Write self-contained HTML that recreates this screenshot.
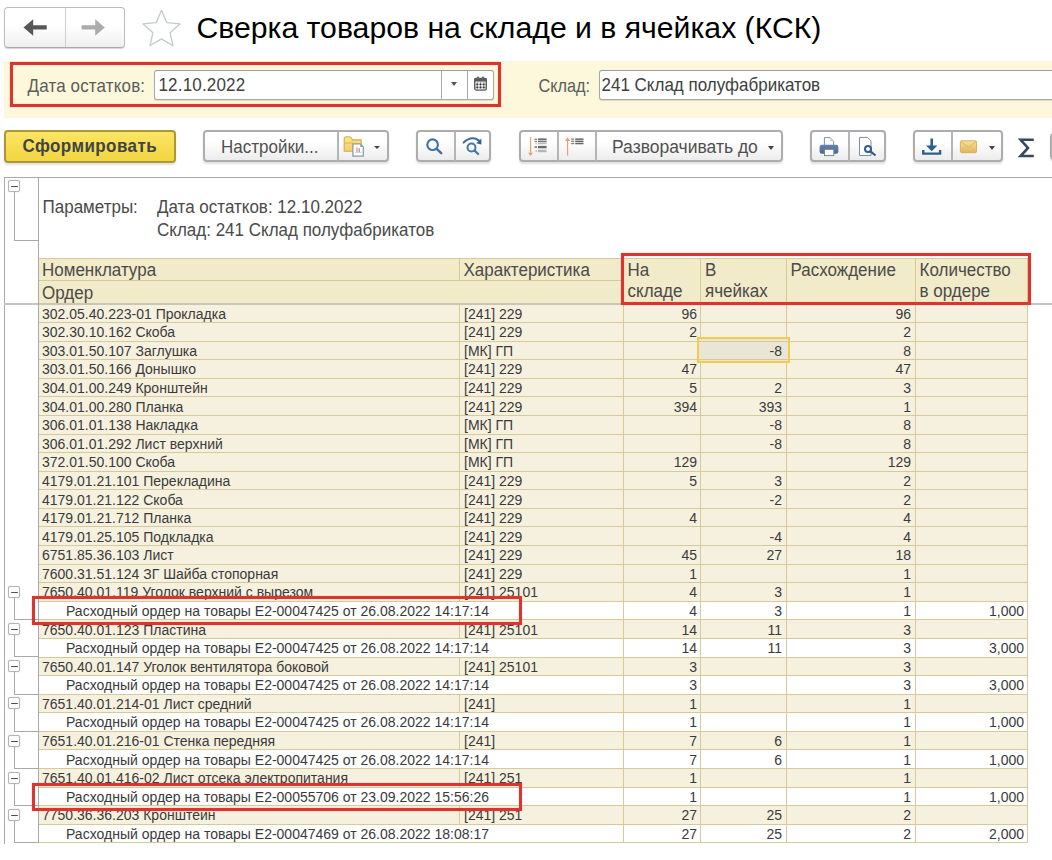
<!DOCTYPE html>
<html><head><meta charset="utf-8">
<style>
html,body{margin:0;padding:0;background:#fff;}
body{width:1052px;height:860px;overflow:hidden;position:relative;font-family:"Liberation Sans",sans-serif;}
.a{position:absolute;}
.nav{position:absolute;left:4px;top:7px;width:119px;height:39px;border:1px solid #bdbdbd;border-bottom-color:#a9a9a9;border-radius:4px;background:linear-gradient(#fff 45%,#efefef);box-shadow:0 1px 1px rgba(0,0,0,.18);}
.title{position:absolute;left:196.5px;top:12.8px;font-size:30.2px;line-height:30px;color:#000;white-space:nowrap;}
.panel{position:absolute;left:4px;top:61px;width:1048px;height:57px;background:#fdf8db;}
.redbox{position:absolute;z-index:5;border:3px solid #dc3531;box-sizing:border-box;box-shadow:0 0 0.8px rgba(220,53,49,.7), inset 0 0 0.8px rgba(220,53,49,.7);}
.lbl{position:absolute;font-size:17px;line-height:17px;color:#5c5c5c;white-space:nowrap;transform:scaleY(1.13);transform-origin:0 14px;}
.inp{position:absolute;box-shadow:0 1px 1px rgba(0,0,0,.12);background:#fff;border:1px solid #a9a9a9;border-top-color:#9d9d9d;border-radius:3px;box-sizing:border-box;}
.itxt{position:absolute;font-size:17px;line-height:17px;color:#404040;white-space:nowrap;transform:scaleY(1.13);transform-origin:0 14px;}
.btn{position:absolute;box-sizing:border-box;border:2px solid #adadad;border-radius:4px;background:linear-gradient(#fff 35%,#ececec);box-shadow:0 2px 2px rgba(0,0,0,.12);}
.btxt{position:absolute;font-size:17.5px;line-height:17.5px;color:#505050;white-space:nowrap;transform:scaleY(1.08);transform-origin:0 14px;}
.dv{position:absolute;width:2px;background:#b5b5b5;}
.tri{position:absolute;width:0;height:0;border-left:3.5px solid transparent;border-right:3.5px solid transparent;border-top:4px solid #444;}
.rep{position:absolute;left:4px;top:177px;width:1048px;height:666px;border-top:1px solid #a9a9a9;border-left:1px solid #a9a9a9;}
.row{position:absolute;left:38px;width:990px;}
.hl{position:absolute;z-index:2;left:38px;width:990px;height:1px;background:#d5cb9a;}
.vl{position:absolute;z-index:1;width:1px;background:#d5cb9a;}
.t{position:absolute;z-index:3;font-size:14px;line-height:14px;color:#3a3a3a;white-space:nowrap;}
.t.r{text-align:right;}
.tl{position:absolute;background:#a9a9a9;}
.mb{position:absolute;width:10px;height:10px;border:1px solid #b4b4b4;border-radius:2px;background:#fff;box-shadow:0 0 1px rgba(0,0,0,.25);}
.mb:after{content:"";position:absolute;left:1.5px;top:4.5px;width:7.5px;height:1.5px;background:#505050;border-radius:1px;}
.hd{position:absolute;background:#f2ebc9;}
.ht{position:absolute;font-size:17px;line-height:17px;color:#4a4a4a;white-space:nowrap;transform:scaleY(1.09);transform-origin:0 14px;}
</style></head><body>

<!-- nav buttons -->
<div class="nav"></div>
<div class="a" style="left:65px;top:8px;width:1px;height:39px;background:#cfcfcf"></div>
<svg class="a" style="left:0;top:0" width="130" height="50">
  <polygon points="23.5,27.4 33.2,19.2 33.2,25.3 46.7,25.3 46.7,29.6 33.2,29.6 33.2,35.8" fill="#575757"/>
  <polygon points="104.8,27.4 95.2,19.2 95.2,25.3 81.6,25.3 81.6,29.6 95.2,29.6 95.2,35.8" fill="#ababab"/>
</svg>
<!-- star -->
<svg class="a" style="left:138px;top:6px" width="48" height="44">
  <polygon points="23.50,4.30 28.79,16.62 42.14,17.84 32.06,26.68 35.02,39.76 23.50,32.90 11.98,39.76 14.94,26.68 4.86,17.84 18.21,16.62" fill="none" stroke="#c5c9ce" stroke-width="1.3" stroke-linejoin="round"/>
</svg>
<div class="title">Сверка товаров на складе и в ячейках (КСК)</div>

<!-- filter panel -->
<div class="panel"></div>
<div class="lbl" style="left:27.5px;top:77.6px;letter-spacing:0.15px">Дата остатков:</div>
<div class="inp" style="left:154px;top:70px;width:339.5px;height:30px"></div>
<div class="itxt" style="left:158.5px;top:77.4px;letter-spacing:0.17px">12.10.2022</div>
<div class="a" style="left:441px;top:71px;width:1px;height:28px;background:#a9a9a9"></div>
<div class="a" style="left:467px;top:71px;width:1px;height:28px;background:#a9a9a9"></div>
<div class="tri" style="left:451px;top:82px;border-top-color:#555"></div>
<svg class="a" style="left:472px;top:75px" width="18" height="18">
  <rect x="2.7" y="3.5" width="11.6" height="11.6" rx="1.6" fill="#e4e4e4" stroke="#5e5e5e" stroke-width="1.3"/>
  <rect x="2.2" y="3" width="12.6" height="3.6" rx="1.2" fill="#5a5a5a"/>
  <circle cx="6" cy="2.9" r="1.3" fill="#6a6a6a"/><circle cx="11" cy="2.9" r="1.3" fill="#6a6a6a"/>
  <g stroke="#8a8a8a" stroke-width="0.7"><line x1="5.2" y1="6.5" x2="5.2" y2="14.5"/><line x1="8.5" y1="6.5" x2="8.5" y2="14.5"/><line x1="11.8" y1="6.5" x2="11.8" y2="14.5"/>
  <line x1="3" y1="9.4" x2="14" y2="9.4"/><line x1="3" y1="12.4" x2="14" y2="12.4"/></g>
  <g fill="#333"><circle cx="5.2" cy="9.4" r="0.8"/><circle cx="8.5" cy="9.4" r="0.8"/><circle cx="11.8" cy="9.4" r="0.8"/><circle cx="5.2" cy="12.4" r="0.8"/><circle cx="8.5" cy="12.4" r="0.8"/><circle cx="11.8" cy="12.4" r="0.8"/></g>
</svg>
<div class="redbox" style="left:10px;top:62px;width:490.5px;height:44.5px"></div>
<div class="lbl" style="left:538.5px;top:77.8px;font-size:16.3px">Склад:</div>
<div class="inp" style="left:598.5px;top:70px;width:480px;height:30px"></div>
<div class="itxt" style="left:601.5px;top:77.4px">241 Склад полуфабрикатов</div>

<!-- toolbar -->
<div class="btn" style="left:4px;top:130px;width:172px;height:32.5px;border:2px solid #aa9838;background:linear-gradient(#fbe565,#f1d640)"></div>
<div class="btxt" style="left:22.5px;top:137.8px;font-weight:bold;font-size:17px;line-height:17px;letter-spacing:0.42px;color:#434343">Сформировать</div>

<div class="btn" style="left:203px;top:130px;width:186px;height:32px"></div>
<div class="dv" style="left:336.5px;top:131px;height:30px"></div>
<div class="btxt" style="left:221px;top:139.3px;font-size:17px;line-height:17px">Настройки...</div>
<svg class="a" style="left:338px;top:132px" width="30" height="28">
  <defs><linearGradient id="fg" x1="0" y1="0" x2="0" y2="1"><stop offset="0" stop-color="#fbe57e"/><stop offset="1" stop-color="#f2cf73"/></linearGradient></defs>
  <path d="M6.2 19.3 V6.8 Q6.2 4.8 8.4 4.8 H11.3 Q12.7 4.8 13.6 6.3 L14.5 7.9 H23.2 V19.3 Z" fill="url(#fg)" stroke="#d6aa52" stroke-width="1.1"/>
  <path d="M6.2 11 H15" stroke="#d9b060" stroke-width="0.9"/>
  <path d="M14.9 11.9 H22.3 L25.3 14.9 V24.1 H14.9 Z" fill="#fff" stroke="#8d9bab" stroke-width="1.3"/>
  <path d="M22.3 11.9 V14.9 H25.3 Z" fill="#8d9bab"/>
  <rect x="18.3" y="15.3" width="1.3" height="4.8" fill="#ec8c8c"/><rect x="20.6" y="16.2" width="1.3" height="3.9" fill="#7cbb7c"/>
  <rect x="17.2" y="20.1" width="6.5" height="0.6" fill="#b9b9b9"/>
</svg>
<div class="tri" style="left:374px;top:146px;border-left-width:3.3px;border-right-width:3.3px;border-top-width:3px"></div>

<div class="btn" style="left:416px;top:130px;width:75px;height:32px"></div>
<div class="dv" style="left:454px;top:131px;height:30px"></div>
<svg class="a" style="left:424px;top:136px" width="22" height="22">
  <circle cx="8.6" cy="8.7" r="5.3" fill="none" stroke="#3f72a3" stroke-width="2.1"/>
  <line x1="13" y1="13.2" x2="17.2" y2="17.2" stroke="#3f72a3" stroke-width="2.5" stroke-linecap="round"/>
</svg>
<svg class="a" style="left:460px;top:132px" width="26" height="26">
  <circle cx="11.5" cy="15.5" r="4" fill="none" stroke="#4576a6" stroke-width="2"/>
  <line x1="14.6" y1="18.6" x2="18.2" y2="22" stroke="#4576a6" stroke-width="2.2" stroke-linecap="round"/>
  <path d="M3.6 10.6 Q11.5 3.2 19 8.6" fill="none" stroke="#3a6c9e" stroke-width="2" stroke-linecap="round"/>
  <polygon points="21.4,6.6 21.4,12.4 16.2,11.2" fill="#2f6496"/>
</svg>

<div class="btn" style="left:518.5px;top:130px;width:264px;height:32px"></div>
<div class="dv" style="left:556.5px;top:131px;height:30px"></div>
<div class="dv" style="left:595px;top:131px;height:30px"></div>
<svg class="a" style="left:526px;top:135px" width="24" height="24">
  <rect x="4" y="2" width="1.1" height="16.5" fill="#f29b6b"/>
  <polygon points="2,17.8 7.1,17.8 4.55,20.9" fill="#f29b6b"/>
  <g fill="#6c6c6c"><rect x="12" y="3.4" width="8.6" height="2"/><rect x="12" y="6.1" width="8.6" height="1.2"/><rect x="12" y="10.9" width="8.6" height="2.4"/></g>
  <g fill="#b4b4b4"><rect x="12" y="8.1" width="8.6" height="1.1"/><rect x="12" y="14.8" width="8.6" height="2.4"/></g>
  <g fill="#8a8a8a"><rect x="8.4" y="3.6" width="2.6" height="1.6"/><rect x="8.4" y="6.1" width="2.6" height="1.1"/><rect x="8.4" y="11.2" width="2.6" height="1.8"/></g>
  <g fill="#c8c8c8"><rect x="9.4" y="8" width="1.6" height="1.2"/><rect x="9.4" y="15" width="1.6" height="2"/></g>
</svg>
<svg class="a" style="left:563px;top:135px" width="24" height="24">
  <rect x="4.05" y="4.5" width="1.1" height="16.2" fill="#f29b6b"/>
  <polygon points="2,5.9 7.2,5.9 4.6,2.2" fill="#f29b6b"/>
  <g fill="#666"><rect x="12.2" y="3.4" width="8.3" height="1.5"/><rect x="12.2" y="5.6" width="8.3" height="1.5"/><rect x="12.2" y="7.8" width="8.3" height="1.5"/></g>
  <g fill="#808080"><rect x="8.2" y="3.5" width="3" height="1.3"/><rect x="8.2" y="5.7" width="3" height="1.3"/><rect x="8.2" y="7.9" width="3" height="1.3"/></g>
</svg>
<div class="btxt" style="left:612px;top:139px">Разворачивать до</div>
<div class="tri" style="left:767.5px;top:146px"></div>

<div class="btn" style="left:810px;top:130px;width:76px;height:32px"></div>
<div class="dv" style="left:848px;top:131px;height:30px"></div>
<svg class="a" style="left:816px;top:135px" width="26" height="24">
  <defs><linearGradient id="pg" x1="0" y1="0" x2="0" y2="1"><stop offset="0" stop-color="#6383ad"/><stop offset="1" stop-color="#4a6a92"/></linearGradient></defs>
  <path d="M8.4 2.6 h5.6 l3.6 3.6 v4.5 h-9.2z" fill="#fff" stroke="#7f90a6" stroke-width="1"/>
  <path d="M14 2.6 v3.6 h3.6z" fill="#c9d3df"/>
  <rect x="3.6" y="9.7" width="18.8" height="9" rx="2.3" fill="url(#pg)"/>
  <rect x="8.5" y="14.3" width="9.3" height="6.3" fill="#fff" stroke="#6a7d96" stroke-width="0.9"/>
</svg>
<svg class="a" style="left:856px;top:135px" width="24" height="24">
  <path d="M3.5 2.4 h8 l3.5 3.5 v14.6 h-11.5z" fill="#fff" stroke="#7d8fa3" stroke-width="1"/>
  <circle cx="12" cy="14" r="3" fill="none" stroke="#2d5f8a" stroke-width="2"/>
  <line x1="14.2" y1="16.2" x2="19.5" y2="20.5" stroke="#2d5f8a" stroke-width="2.2"/>
</svg>

<div class="btn" style="left:913px;top:130px;width:90px;height:32px"></div>
<div class="dv" style="left:950.5px;top:131px;height:30px"></div>
<svg class="a" style="left:920px;top:135px" width="24" height="24">
  <rect x="10.4" y="3.5" width="2.6" height="8" fill="#2d5f8a"/>
  <polygon points="6,10.5 17.4,10.5 11.7,16.3" fill="#2d5f8a"/>
  <path d="M3.3 15 v3.6 h16.8 v-3.6" fill="none" stroke="#2d5f8a" stroke-width="2.4"/>
</svg>
<svg class="a" style="left:958px;top:138px" width="22" height="18">
  <defs><linearGradient id="eg" x1="0" y1="0" x2="0" y2="1"><stop offset="0" stop-color="#f7e09a"/><stop offset="1" stop-color="#e2b65e"/></linearGradient></defs>
  <rect x="2.4" y="2.8" width="16.2" height="11.9" rx="1.4" fill="url(#eg)" stroke="#d9a94f" stroke-width="0.9"/>
  <path d="M3 3.6 L10.5 9.6 L18 3.6" fill="none" stroke="#d9b063" stroke-width="0.9"/>
  <path d="M3 14 L8.2 8.6 M18 14 L12.8 8.6" fill="none" stroke="#e0b868" stroke-width="0.7"/>
</svg>
<div class="tri" style="left:989px;top:146px"></div>

<svg class="a" style="left:1017px;top:137px" width="20" height="22">
  <path d="M16.8 2.8 H3.6 L11 11 L3.6 19 H16.8" fill="none" stroke="#34495e" stroke-width="2.6" stroke-linejoin="miter"/>
</svg>
<div class="btn" style="left:1050px;top:133px;width:20px;height:27px"></div>

<!-- report -->
<div class="rep"></div>
<div class="a" style="left:4px;top:303px;width:34px;height:2px;background:#c6c6c6"></div>
<div class="a" style="left:1028px;top:303px;width:24px;height:2px;background:#c6c6c6"></div>
<div class="tl" style="left:14px;top:192px;width:1px;height:48px"></div>
<div class="tl" style="left:14px;top:240px;width:24px;height:1px"></div>
<div class="mb" style="left:8px;top:180px"></div>
<div class="ht" style="left:42.5px;top:199px">Параметры:</div>
<div class="ht" style="left:157px;top:199.2px">Дата остатков: 12.10.2022</div>
<div class="ht" style="left:157px;top:221.9px">Склад: 241 Склад полуфабрикатов</div>

<!-- header -->
<div class="hd" style="left:38px;top:258px;width:990px;height:46px"></div>
<div class="a" style="left:38px;top:258px;width:990px;height:1px;background:#d5cb9a"></div>
<div class="a" style="left:38px;top:280px;width:585px;height:1px;background:#d5cb9a"></div>
<div class="a" style="left:459px;top:258px;width:1px;height:23px;background:#d5cb9a"></div>
<div class="a" style="left:623px;top:258px;width:1px;height:46px;background:#d5cb9a"></div>
<div class="a" style="left:700px;top:258px;width:1px;height:46px;background:#d5cb9a"></div>
<div class="a" style="left:786px;top:258px;width:1px;height:46px;background:#d5cb9a"></div>
<div class="a" style="left:915px;top:258px;width:1px;height:46px;background:#d5cb9a"></div>
<div class="a" style="left:1027px;top:258px;width:1px;height:46px;background:#d5cb9a"></div>

<div class="ht" style="left:42px;top:261.7px">Номенклатура</div>
<div class="ht" style="left:42px;top:284.7px">Ордер</div>
<div class="ht" style="left:463.5px;top:261.7px">Характеристика</div>
<div class="ht" style="left:627.5px;top:261.7px">На</div>
<div class="ht" style="left:627.5px;top:282.6px">складе</div>
<div class="ht" style="left:705px;top:261.7px">В</div>
<div class="ht" style="left:705px;top:282.6px">ячейках</div>
<div class="ht" style="left:790.5px;top:261.7px">Расхождение</div>
<div class="ht" style="left:919.5px;top:261.7px">Количество</div>
<div class="ht" style="left:919.5px;top:282.6px">в ордере</div>

<div class="row" style="top:304.0px;height:18.58px;background:#f6f1de"></div>
<div class="row" style="top:322.58px;height:18.58px;background:#f6f1de"></div>
<div class="row" style="top:341.16px;height:18.58px;background:#f6f1de"></div>
<div class="row" style="top:359.74px;height:18.58px;background:#f6f1de"></div>
<div class="row" style="top:378.32px;height:18.58px;background:#f6f1de"></div>
<div class="row" style="top:396.9px;height:18.58px;background:#f6f1de"></div>
<div class="row" style="top:415.48px;height:18.58px;background:#f6f1de"></div>
<div class="row" style="top:434.06px;height:18.58px;background:#f6f1de"></div>
<div class="row" style="top:452.64px;height:18.58px;background:#f6f1de"></div>
<div class="row" style="top:471.22px;height:18.58px;background:#f6f1de"></div>
<div class="row" style="top:489.8px;height:18.58px;background:#f6f1de"></div>
<div class="row" style="top:508.38px;height:18.58px;background:#f6f1de"></div>
<div class="row" style="top:526.96px;height:18.58px;background:#f6f1de"></div>
<div class="row" style="top:545.54px;height:18.58px;background:#f6f1de"></div>
<div class="row" style="top:564.12px;height:18.58px;background:#f6f1de"></div>
<div class="row" style="top:582.7px;height:18.58px;background:#f6f1de"></div>
<div class="row" style="top:601.28px;height:18.58px;background:#fff"></div>
<div class="row" style="top:619.86px;height:18.58px;background:#f6f1de"></div>
<div class="row" style="top:638.44px;height:18.58px;background:#fff"></div>
<div class="row" style="top:657.02px;height:18.58px;background:#f6f1de"></div>
<div class="row" style="top:675.6px;height:18.58px;background:#fff"></div>
<div class="row" style="top:694.18px;height:18.58px;background:#f6f1de"></div>
<div class="row" style="top:712.76px;height:18.58px;background:#fff"></div>
<div class="row" style="top:731.34px;height:18.58px;background:#f6f1de"></div>
<div class="row" style="top:749.92px;height:18.58px;background:#fff"></div>
<div class="row" style="top:768.5px;height:18.58px;background:#f6f1de"></div>
<div class="row" style="top:787.08px;height:18.58px;background:#fff"></div>
<div class="row" style="top:805.66px;height:18.58px;background:#f6f1de"></div>
<div class="row" style="top:824.24px;height:18.58px;background:#fff"></div>
<div class="hl" style="top:322px"></div>
<div class="hl" style="top:341px"></div>
<div class="hl" style="top:359px"></div>
<div class="hl" style="top:378px"></div>
<div class="hl" style="top:396px"></div>
<div class="hl" style="top:415px"></div>
<div class="hl" style="top:434px"></div>
<div class="hl" style="top:452px"></div>
<div class="hl" style="top:471px"></div>
<div class="hl" style="top:489px"></div>
<div class="hl" style="top:508px"></div>
<div class="hl" style="top:526px"></div>
<div class="hl" style="top:545px"></div>
<div class="hl" style="top:564px"></div>
<div class="hl" style="top:582px"></div>
<div class="hl" style="top:601px"></div>
<div class="hl" style="top:619px"></div>
<div class="hl" style="top:638px"></div>
<div class="hl" style="top:657px"></div>
<div class="hl" style="top:675px"></div>
<div class="hl" style="top:694px"></div>
<div class="hl" style="top:712px"></div>
<div class="hl" style="top:731px"></div>
<div class="hl" style="top:749px"></div>
<div class="hl" style="top:768px"></div>
<div class="hl" style="top:787px"></div>
<div class="hl" style="top:805px"></div>
<div class="hl" style="top:824px"></div>
<div class="hl" style="top:842px"></div>
<div class="vl" style="left:38px;top:304.0px;height:538.82px"></div>
<div class="vl" style="left:459px;top:304.0px;height:19.08px"></div>
<div class="vl" style="left:459px;top:322.58px;height:19.08px"></div>
<div class="vl" style="left:459px;top:341.16px;height:19.08px"></div>
<div class="vl" style="left:459px;top:359.74px;height:19.08px"></div>
<div class="vl" style="left:459px;top:378.32px;height:19.08px"></div>
<div class="vl" style="left:459px;top:396.9px;height:19.08px"></div>
<div class="vl" style="left:459px;top:415.48px;height:19.08px"></div>
<div class="vl" style="left:459px;top:434.06px;height:19.08px"></div>
<div class="vl" style="left:459px;top:452.64px;height:19.08px"></div>
<div class="vl" style="left:459px;top:471.22px;height:19.08px"></div>
<div class="vl" style="left:459px;top:489.8px;height:19.08px"></div>
<div class="vl" style="left:459px;top:508.38px;height:19.08px"></div>
<div class="vl" style="left:459px;top:526.96px;height:19.08px"></div>
<div class="vl" style="left:459px;top:545.54px;height:19.08px"></div>
<div class="vl" style="left:459px;top:564.12px;height:19.08px"></div>
<div class="vl" style="left:459px;top:582.7px;height:19.08px"></div>
<div class="vl" style="left:459px;top:619.86px;height:19.08px"></div>
<div class="vl" style="left:459px;top:657.02px;height:19.08px"></div>
<div class="vl" style="left:459px;top:694.18px;height:19.08px"></div>
<div class="vl" style="left:459px;top:731.34px;height:19.08px"></div>
<div class="vl" style="left:459px;top:768.5px;height:19.08px"></div>
<div class="vl" style="left:459px;top:805.66px;height:19.08px"></div>
<div class="vl" style="left:623px;top:304.0px;height:538.82px"></div>
<div class="vl" style="left:700px;top:304.0px;height:538.82px"></div>
<div class="vl" style="left:786px;top:304.0px;height:538.82px"></div>
<div class="vl" style="left:915px;top:304.0px;height:538.82px"></div>
<div class="vl" style="left:1027px;top:304.0px;height:538.82px"></div>
<div class="t" style="left:42px;top:306.7px">302.05.40.223-01 Прокладка</div>
<div class="t" style="left:464px;top:306.7px">[241] 229</div>
<div class="t r" style="right:355px;top:306.7px">96</div>
<div class="t r" style="right:141px;top:306.7px">96</div>
<div class="t" style="left:42px;top:325.28px">302.30.10.162 Скоба</div>
<div class="t" style="left:464px;top:325.28px">[241] 229</div>
<div class="t r" style="right:355px;top:325.28px">2</div>
<div class="t r" style="right:141px;top:325.28px">2</div>
<div class="t" style="left:42px;top:343.86px">303.01.50.107 Заглушка</div>
<div class="t" style="left:464px;top:343.86px">[МК] ГП</div>
<div class="t r" style="right:270px;top:343.86px">-8</div>
<div class="t r" style="right:141px;top:343.86px">8</div>
<div class="t" style="left:42px;top:362.44px">303.01.50.166 Донышко</div>
<div class="t" style="left:464px;top:362.44px">[241] 229</div>
<div class="t r" style="right:355px;top:362.44px">47</div>
<div class="t r" style="right:141px;top:362.44px">47</div>
<div class="t" style="left:42px;top:381.02px">304.01.00.249 Кронштейн</div>
<div class="t" style="left:464px;top:381.02px">[241] 229</div>
<div class="t r" style="right:355px;top:381.02px">5</div>
<div class="t r" style="right:270px;top:381.02px">2</div>
<div class="t r" style="right:141px;top:381.02px">3</div>
<div class="t" style="left:42px;top:399.6px">304.01.00.280 Планка</div>
<div class="t" style="left:464px;top:399.6px">[241] 229</div>
<div class="t r" style="right:355px;top:399.6px">394</div>
<div class="t r" style="right:270px;top:399.6px">393</div>
<div class="t r" style="right:141px;top:399.6px">1</div>
<div class="t" style="left:42px;top:418.18px">306.01.01.138 Накладка</div>
<div class="t" style="left:464px;top:418.18px">[МК] ГП</div>
<div class="t r" style="right:270px;top:418.18px">-8</div>
<div class="t r" style="right:141px;top:418.18px">8</div>
<div class="t" style="left:42px;top:436.76px">306.01.01.292 Лист верхний</div>
<div class="t" style="left:464px;top:436.76px">[МК] ГП</div>
<div class="t r" style="right:270px;top:436.76px">-8</div>
<div class="t r" style="right:141px;top:436.76px">8</div>
<div class="t" style="left:42px;top:455.34px">372.01.50.100 Скоба</div>
<div class="t" style="left:464px;top:455.34px">[МК] ГП</div>
<div class="t r" style="right:355px;top:455.34px">129</div>
<div class="t r" style="right:141px;top:455.34px">129</div>
<div class="t" style="left:42px;top:473.92px">4179.01.21.101 Перекладина</div>
<div class="t" style="left:464px;top:473.92px">[241] 229</div>
<div class="t r" style="right:355px;top:473.92px">5</div>
<div class="t r" style="right:270px;top:473.92px">3</div>
<div class="t r" style="right:141px;top:473.92px">2</div>
<div class="t" style="left:42px;top:492.5px">4179.01.21.122 Скоба</div>
<div class="t" style="left:464px;top:492.5px">[241] 229</div>
<div class="t r" style="right:270px;top:492.5px">-2</div>
<div class="t r" style="right:141px;top:492.5px">2</div>
<div class="t" style="left:42px;top:511.08px">4179.01.21.712 Планка</div>
<div class="t" style="left:464px;top:511.08px">[241] 229</div>
<div class="t r" style="right:355px;top:511.08px">4</div>
<div class="t r" style="right:141px;top:511.08px">4</div>
<div class="t" style="left:42px;top:529.66px">4179.01.25.105 Подкладка</div>
<div class="t" style="left:464px;top:529.66px">[241] 229</div>
<div class="t r" style="right:270px;top:529.66px">-4</div>
<div class="t r" style="right:141px;top:529.66px">4</div>
<div class="t" style="left:42px;top:548.24px">6751.85.36.103 Лист</div>
<div class="t" style="left:464px;top:548.24px">[241] 229</div>
<div class="t r" style="right:355px;top:548.24px">45</div>
<div class="t r" style="right:270px;top:548.24px">27</div>
<div class="t r" style="right:141px;top:548.24px">18</div>
<div class="t" style="left:42px;top:566.82px">7600.31.51.124 ЗГ Шайба стопорная</div>
<div class="t" style="left:464px;top:566.82px">[241] 229</div>
<div class="t r" style="right:355px;top:566.82px">1</div>
<div class="t r" style="right:141px;top:566.82px">1</div>
<div class="t" style="left:42px;top:585.4px">7650.40.01.119 Уголок верхний с вырезом</div>
<div class="t" style="left:464px;top:585.4px">[241] 25101</div>
<div class="t r" style="right:355px;top:585.4px">4</div>
<div class="t r" style="right:270px;top:585.4px">3</div>
<div class="t r" style="right:141px;top:585.4px">1</div>
<div class="t" style="left:66px;top:603.98px">Расходный ордер на товары E2-00047425 от 26.08.2022 14:17:14</div>
<div class="t r" style="right:355px;top:603.98px">4</div>
<div class="t r" style="right:270px;top:603.98px">3</div>
<div class="t r" style="right:141px;top:603.98px">1</div>
<div class="t r" style="right:28px;top:603.98px">1,000</div>
<div class="t" style="left:42px;top:622.56px">7650.40.01.123 Пластина</div>
<div class="t" style="left:464px;top:622.56px">[241] 25101</div>
<div class="t r" style="right:355px;top:622.56px">14</div>
<div class="t r" style="right:270px;top:622.56px">11</div>
<div class="t r" style="right:141px;top:622.56px">3</div>
<div class="t" style="left:66px;top:641.14px">Расходный ордер на товары E2-00047425 от 26.08.2022 14:17:14</div>
<div class="t r" style="right:355px;top:641.14px">14</div>
<div class="t r" style="right:270px;top:641.14px">11</div>
<div class="t r" style="right:141px;top:641.14px">3</div>
<div class="t r" style="right:28px;top:641.14px">3,000</div>
<div class="t" style="left:42px;top:659.72px">7650.40.01.147 Уголок вентилятора боковой</div>
<div class="t" style="left:464px;top:659.72px">[241] 25101</div>
<div class="t r" style="right:355px;top:659.72px">3</div>
<div class="t r" style="right:141px;top:659.72px">3</div>
<div class="t" style="left:66px;top:678.3px">Расходный ордер на товары E2-00047425 от 26.08.2022 14:17:14</div>
<div class="t r" style="right:355px;top:678.3px">3</div>
<div class="t r" style="right:141px;top:678.3px">3</div>
<div class="t r" style="right:28px;top:678.3px">3,000</div>
<div class="t" style="left:42px;top:696.88px">7651.40.01.214-01 Лист средний</div>
<div class="t" style="left:464px;top:696.88px">[241]</div>
<div class="t r" style="right:355px;top:696.88px">1</div>
<div class="t r" style="right:141px;top:696.88px">1</div>
<div class="t" style="left:66px;top:715.46px">Расходный ордер на товары E2-00047425 от 26.08.2022 14:17:14</div>
<div class="t r" style="right:355px;top:715.46px">1</div>
<div class="t r" style="right:141px;top:715.46px">1</div>
<div class="t r" style="right:28px;top:715.46px">1,000</div>
<div class="t" style="left:42px;top:734.04px">7651.40.01.216-01 Стенка передняя</div>
<div class="t" style="left:464px;top:734.04px">[241]</div>
<div class="t r" style="right:355px;top:734.04px">7</div>
<div class="t r" style="right:270px;top:734.04px">6</div>
<div class="t r" style="right:141px;top:734.04px">1</div>
<div class="t" style="left:66px;top:752.62px">Расходный ордер на товары E2-00047425 от 26.08.2022 14:17:14</div>
<div class="t r" style="right:355px;top:752.62px">7</div>
<div class="t r" style="right:270px;top:752.62px">6</div>
<div class="t r" style="right:141px;top:752.62px">1</div>
<div class="t r" style="right:28px;top:752.62px">1,000</div>
<div class="t" style="left:42px;top:771.2px">7651.40.01.416-02 Лист отсека электропитания</div>
<div class="t" style="left:464px;top:771.2px">[241] 251</div>
<div class="t r" style="right:355px;top:771.2px">1</div>
<div class="t r" style="right:141px;top:771.2px">1</div>
<div class="t" style="left:66px;top:789.78px">Расходный ордер на товары E2-00055706 от 23.09.2022 15:56:26</div>
<div class="t r" style="right:355px;top:789.78px">1</div>
<div class="t r" style="right:141px;top:789.78px">1</div>
<div class="t r" style="right:28px;top:789.78px">1,000</div>
<div class="t" style="left:42px;top:808.36px">7750.36.36.203 Кронштейн</div>
<div class="t" style="left:464px;top:808.36px">[241] 251</div>
<div class="t r" style="right:355px;top:808.36px">27</div>
<div class="t r" style="right:270px;top:808.36px">25</div>
<div class="t r" style="right:141px;top:808.36px">2</div>
<div class="t" style="left:66px;top:826.94px">Расходный ордер на товары E2-00047469 от 26.08.2022 18:08:17</div>
<div class="t r" style="right:355px;top:826.94px">27</div>
<div class="t r" style="right:270px;top:826.94px">25</div>
<div class="t r" style="right:141px;top:826.94px">2</div>
<div class="t r" style="right:28px;top:826.94px">2,000</div>
<div class="tl" style="left:14px;top:598px;width:1px;height:21px"></div>
<div class="tl" style="left:14px;top:619px;width:24px;height:1px"></div>
<div class="mb" style="left:8px;top:586px"></div>
<div class="tl" style="left:14px;top:635px;width:1px;height:21px"></div>
<div class="tl" style="left:14px;top:656px;width:24px;height:1px"></div>
<div class="mb" style="left:8px;top:623px"></div>
<div class="tl" style="left:14px;top:672px;width:1px;height:22px"></div>
<div class="tl" style="left:14px;top:694px;width:24px;height:1px"></div>
<div class="mb" style="left:8px;top:660px"></div>
<div class="tl" style="left:14px;top:709px;width:1px;height:22px"></div>
<div class="tl" style="left:14px;top:731px;width:24px;height:1px"></div>
<div class="mb" style="left:8px;top:697px"></div>
<div class="tl" style="left:14px;top:747px;width:1px;height:21px"></div>
<div class="tl" style="left:14px;top:768px;width:24px;height:1px"></div>
<div class="mb" style="left:8px;top:735px"></div>
<div class="tl" style="left:14px;top:784px;width:1px;height:21px"></div>
<div class="tl" style="left:14px;top:805px;width:24px;height:1px"></div>
<div class="mb" style="left:8px;top:772px"></div>
<div class="tl" style="left:14px;top:821px;width:1px;height:21px"></div>
<div class="tl" style="left:14px;top:842px;width:24px;height:1px"></div>
<div class="mb" style="left:8px;top:809px"></div>
<div class="a" style="left:38px;top:303px;width:990px;height:2px;background:#c9c6b6;z-index:2"></div>

<!-- highlight cell -->
<div class="a" style="left:699px;top:339px;width:89px;height:22px;background:#e9e6d5;z-index:1"></div>
<div class="a" style="left:697px;top:337px;width:89px;height:22px;border:2px solid #f3ca4e;z-index:4"></div>

<div class="a" style="left:38px;top:177px;width:1px;height:666px;background:#a9a9a9;z-index:3"></div>
<!-- red boxes -->
<div class="redbox" style="left:621px;top:253px;width:410px;height:52px"></div>
<div class="redbox" style="left:32px;top:596px;width:490px;height:28.5px;border-width:3.5px"></div>
<div class="redbox" style="left:32px;top:783px;width:490px;height:28px;border-width:3.5px"></div>

</body></html>
